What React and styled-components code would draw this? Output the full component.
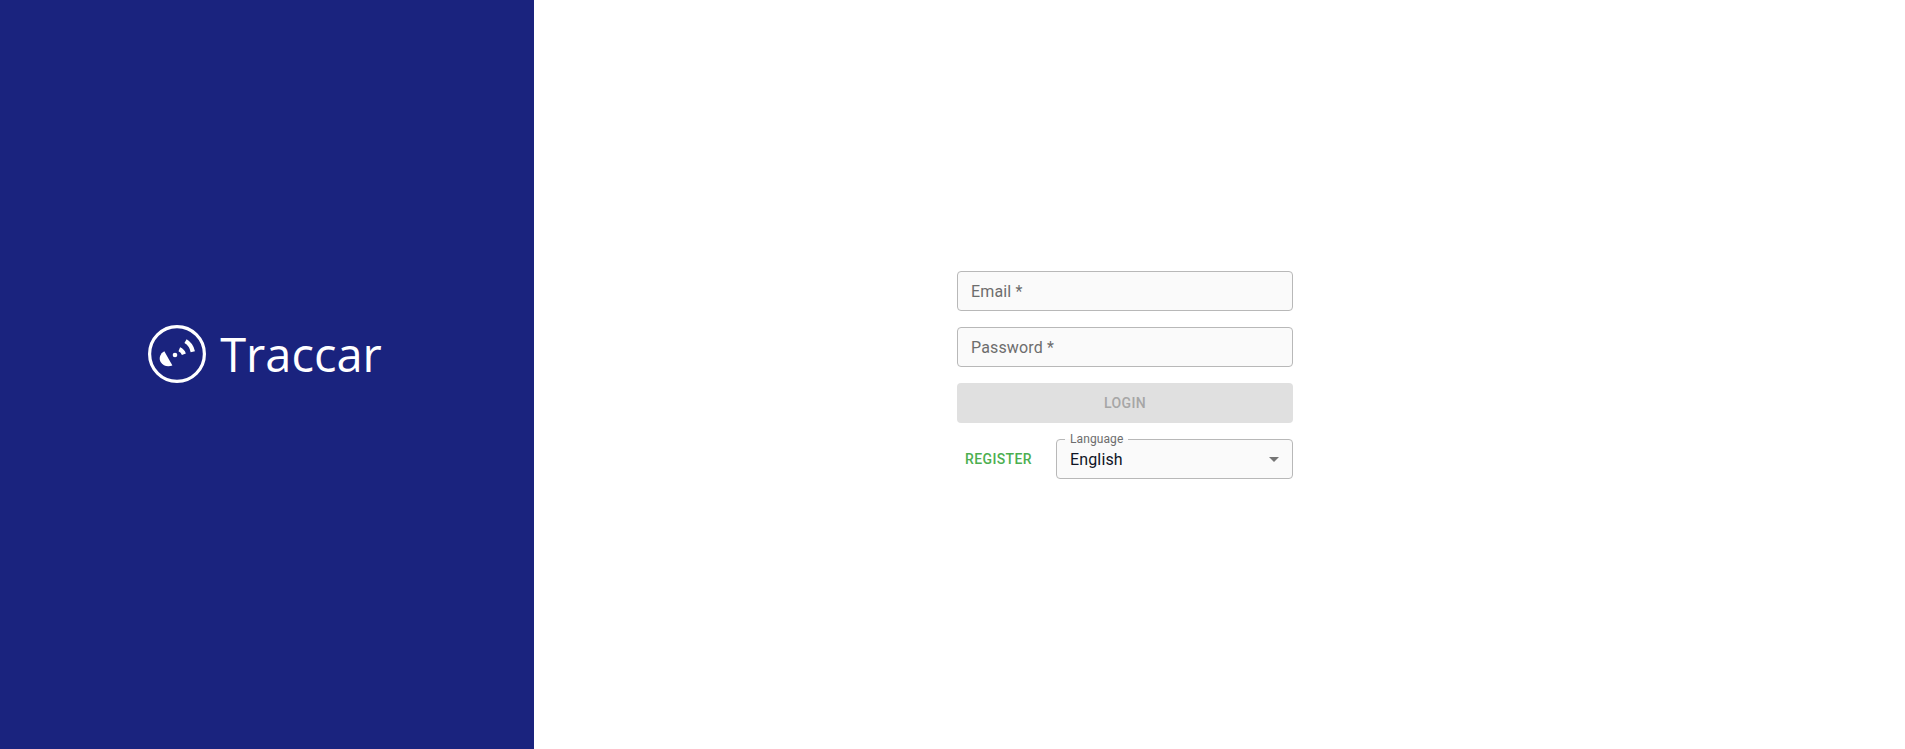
import React from 'react';
import styled, { createGlobalStyle } from 'styled-components';

const Global = createGlobalStyle`
  html, body { margin: 0; padding: 0; height: 100%; background: #fff; }
  * { box-sizing: border-box; }
`;

const Page = styled.div`
  display: flex;
  height: 100vh;
  font-family: Roboto, "Liberation Sans", sans-serif;
`;

const Sidebar = styled.aside`
  flex: 0 0 534px;
  background: #1a237e;
  display: flex;
  align-items: center;
  justify-content: center;
  padding: 0 4px 41px 0;
  color: #fff;
`;

const Logo = styled.div`
  display: flex;
  align-items: center;
  gap: 14px;
`;

const LogoText = styled.span`
  font-family: "Open Sans", sans-serif;
  font-size: 47px;
  line-height: 58px;
`;

const Main = styled.main`
  flex: 1;
  display: flex;
  align-items: center;
  padding-left: 423px;
`;

const Form = styled.form`
  width: 336px;
  display: flex;
  flex-direction: column;
  gap: 16px;
`;

const Field = styled.div`
  position: relative;
  height: 40px;
  flex: 1 0 auto;
  background: #fafafa;
  border: 1px solid #b8b8b8;
  border-radius: 4px;
  display: flex;
  align-items: center;
  padding: 1px 13px 0;
  font-size: 16px;
  letter-spacing: 0.15px;
  color: ${p => (p.$muted ? '#6d6d6d' : '#0f1424')};
`;

const Login = styled.button`
  height: 40px;
  border: 0;
  border-radius: 4px;
  background: #e0e0e0;
  color: #a6a6a6;
  font: 500 14px Roboto, sans-serif;
  letter-spacing: 0.4px;
  text-transform: uppercase;
`;

const Row = styled.div`
  display: flex;
  align-items: center;
  gap: 16px;
`;

const Register = styled.button`
  width: 83px;
  height: 36px;
  padding: 0;
  border: 0;
  background: none;
  color: #4caf50;
  font: 500 14px Roboto, sans-serif;
  letter-spacing: 0.4px;
  text-transform: uppercase;
`;

const Legend = styled.span`
  position: absolute;
  left: 8px;
  top: -8px;
  padding: 0 5px;
  background: linear-gradient(#fff 50%, #fafafa 50%);
  font-size: 12px;
  line-height: 14px;
  letter-spacing: 0.1px;
  color: #6d6d6d;
`;

const Caret = styled.span`
  position: absolute;
  right: 13px;
  top: 17px;
  width: 0;
  height: 0;
  border-left: 5px solid transparent;
  border-right: 5px solid transparent;
  border-top: 5px solid #757575;
`;

export default function App() {
  return (
    <Page>
      <Global />
      <Sidebar>
        <Logo>
          <svg width="58" height="58" viewBox="0 0 58 58" fill="none">
            <circle cx="29" cy="29" r="27.4" stroke="#fff" strokeWidth="3.2" />
            <path d="M16.3 26.3 L24.4 40.4 C20 42.2 15 41 12.6 37 C10.5 33.2 12.2 28.6 16.3 26.3 Z" fill="#fff" />
            <circle cx="27" cy="30" r="2.3" fill="#fff" />
            <path d="M31.3 24.3 C33.5 25.2 35.1 27 35.9 29.2" stroke="#fff" strokeWidth="4.2" />
            <path d="M37.5 16.2 C41.2 18.3 43.8 22 44.8 26.7" stroke="#fff" strokeWidth="4.4" />
          </svg>
          <LogoText>Traccar</LogoText>
        </Logo>
      </Sidebar>
      <Main>
        <Form>
          <Field $muted>Email *</Field>
          <Field $muted>Password *</Field>
          <Login type="button">Login</Login>
          <Row>
            <Register type="button">Register</Register>
            <Field>
              <Legend>Language</Legend>
              English
              <Caret />
            </Field>
          </Row>
        </Form>
      </Main>
    </Page>
  );
}
